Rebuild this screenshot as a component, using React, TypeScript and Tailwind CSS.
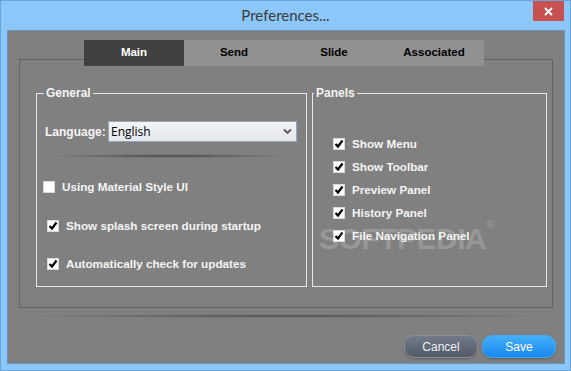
import React from "react";

function Check({ checked }: { checked: boolean }) {
  return (
    <span className="flex h-[12px] w-[12px] items-center justify-center border border-[#d8d8d8] bg-white">
      {checked && (
        <svg width="10" height="10" viewBox="0 0 10 10">
          <path d="M1.5 5 L4 7.5 L8.5 1.5" fill="none" stroke="#000" strokeWidth="2.2" />
        </svg>
      )}
    </span>
  );
}

function Option({ label, checked, className }: { label: string; checked: boolean; className?: string }) {
  return (
    <div className={"flex items-center gap-[7px] " + (className ?? "")}>
      <Check checked={checked} />
      <span className="text-[11.7px] font-bold leading-[14px] text-[#f4f4f4]">{label}</span>
    </div>
  );
}

const tabs = ["Main", "Send", "Slide", "Associated"];

function App() {
  return (
    <div
      className="relative h-[371px] w-[571px] overflow-hidden border border-[#6aa4d8] bg-[#8bc7f9]"
      style={{ fontFamily: '"Liberation Sans", Arial, sans-serif' }}
    >
      {/* title bar */}
      <div className="relative flex h-[29px] items-center justify-center">
        <span className="text-[15px] text-[#3a3a3a]" style={{ fontFamily: "Lato, sans-serif" }}>
          Preferences...
        </span>
        <div className="absolute right-[6px] top-0 flex h-[20px] w-[31px] items-center justify-center bg-[#c75050]">
          <svg width="9" height="9" viewBox="0 0 9 9">
            <path d="M1 1 L8 8 M8 1 L1 8" stroke="#fff" strokeWidth="1.8" />
          </svg>
        </div>
      </div>

      {/* content */}
      <div className="ml-[6px] h-[334px] w-[558px] border border-[#6c93b9] bg-[#808080]">
        {/* tabs */}
        <div className="relative z-10 ml-[76px] mt-[9px] flex h-[26px]">
          {tabs.map((t, i) => (
            <div
              key={t}
              className={
                "flex w-[100px] items-center justify-center text-[11.5px] font-bold " +
                (i === 0 ? "bg-[#414141] text-white" : "bg-[#919191] text-black")
              }
            >
              {t}
            </div>
          ))}
        </div>

        {/* box */}
        <div className="-mt-[7px] ml-[11px] flex h-[249px] w-[534px] gap-[5px] border border-[#646464] pl-[16px] pt-[26px]">
          <fieldset className="h-[201px] w-[271px] border border-[#e6e6e6] pl-[6px]">
            <legend className="ml-[1px] px-[2px] text-[12px] font-bold leading-[14px] text-[#f4f4f4]">General</legend>
            <div className="mt-[21px] flex items-center">
              <span className="ml-[2px] w-[63px] text-[12px] font-bold text-[#f4f4f4]">Language:</span>
              <div className="flex h-[21px] w-[189px] items-center justify-between border border-[#97a7b9] bg-gradient-to-b from-[#f2f4f7] to-[#e3e6eb] pl-[2px] pr-[4px]">
                <span className="text-[12px] text-black" style={{ fontFamily: '"Open Sans", sans-serif' }}>
                  English
                </span>
                <svg width="9" height="7" viewBox="0 0 9 7">
                  <path d="M1 1.5 L4.5 5 L8 1.5" fill="none" stroke="#555" strokeWidth="1.8" />
                </svg>
              </div>
            </div>
            <div className="ml-[7px] mt-[12px] h-[4px] w-[240px] bg-[radial-gradient(ellipse_at_center,rgba(60,60,60,0.8),rgba(60,60,60,0)_70%)]" />
            <Option className="mt-[22px]" label="Using Material Style UI" checked={false} />
            <Option className="ml-[4px] mt-[25px]" label="Show splash screen during startup" checked />
            <Option className="ml-[4px] mt-[24px]" label="Automatically check for updates" checked />
          </fieldset>

          <fieldset className="h-[201px] w-[235px] border border-[#e6e6e6] pl-[20px]">
            <legend className="-ml-[19px] px-[2px] text-[12px] font-bold leading-[14px] text-[#f4f4f4]">Panels</legend>
            <div className="mt-[37px] flex flex-col gap-[9px]">
              <Option label="Show Menu" checked />
              <Option label="Show Toolbar" checked />
              <Option label="Preview Panel" checked />
              <Option label="History Panel" checked />
              <Option label="File Navigation Panel" checked />
            </div>
          </fieldset>
        </div>

        {/* shadow */}
        <div className="ml-[12px] mt-[6px] h-[4px] w-[534px] bg-[radial-gradient(ellipse_at_center,rgba(60,60,60,0.7),rgba(60,60,60,0)_70%)]" />

        {/* buttons */}
        <div className="mr-[8px] mt-[17px] flex justify-end gap-[4px]">
          <button className="h-[23px] w-[74px] rounded-[10px] border border-[#8a919c] bg-gradient-to-b from-[#737b8a] to-[#525a68] text-[12px] text-[#f0f0f0] shadow-[0_1px_2px_rgba(0,0,0,0.3)]">
            Cancel
          </button>
          <button className="h-[23px] w-[74px] rounded-[10px] border border-[#4aa8f0] bg-gradient-to-b from-[#45aef8] to-[#1489ef] text-[12px] text-white shadow-[0_1px_2px_rgba(0,0,0,0.3)]">
            Save
          </button>
        </div>
      </div>

      {/* watermark */}
      <div className="pointer-events-none absolute left-[318px] top-[215px] text-[30px] font-bold tracking-[-0.5px] text-white/20">
        SOFTPEDIA<span className="align-top text-[11px]">®</span>
      </div>
    </div>
  );
}

export default App;
